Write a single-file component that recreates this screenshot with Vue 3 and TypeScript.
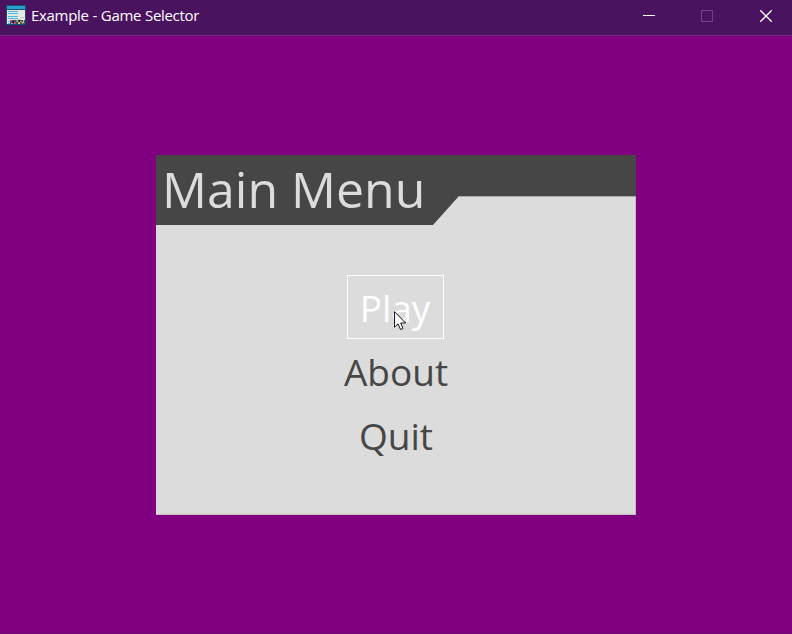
<script setup lang="ts">
import { ref } from 'vue'

interface MenuItem {
  id: string
  label: string
}

const windowTitle = 'Example - Game Selector'
const items: MenuItem[] = [
  { id: 'play', label: 'Play' },
  { id: 'about', label: 'About' },
  { id: 'quit', label: 'Quit' },
]
const selected = ref('play')
</script>

<template>
  <div class="window">
    <header class="titlebar">
      <svg class="app-icon" width="20" height="20" viewBox="0 0 20 20" shape-rendering="crispEdges">
        <rect width="20" height="20" fill="#14506f" />
        <rect x="1" y="1" width="18" height="3" fill="#2a9fcb" />
        <rect x="1" y="5" width="18" height="14" fill="#e6e8e4" />
        <path d="M2 6h10v1H2zM2 8h10v1H2zM2 11h10v1H2zM2 13h10v1H2zM2 16h2v1H2zM2 18h2v1H2z" fill="#45b9dc" />
        <path d="M12 14h3v1h-3zM14 12h4v1h-4z" fill="#c8cbc8" />
        <rect x="4" y="15" width="15" height="4" fill="#4a4b50" />
        <path d="M4 15h2v2H4zM8 17h2v2H8z" fill="#c53fb0" />
        <path d="M6 16h2v2H6zM13 15h1v2h-1z" fill="#202126" />
        <path d="M10 15h2v2h-2zM15 16h1v2h-1z" fill="#5fae72" />
        <path d="M12 17h2v2h-2zM17 15h1v3h-1z" fill="#d6c873" />
        <path d="M14 16h1v1h-1zM16 17h1v2h-1zM5 18h2v1H5z" fill="#a2a6aa" />
      </svg>
      <span class="window-title">{{ windowTitle }}</span>
      <div class="controls">
        <button aria-label="Minimize">
          <svg width="12" height="12" viewBox="0 0 12 12"><path d="M0 5.5h12" stroke="#fff" /></svg>
        </button>
        <button aria-label="Maximize" disabled>
          <svg width="12" height="12" viewBox="0 0 12 12"><rect x=".5" y=".5" width="11" height="11" fill="none" stroke="#70427f" /></svg>
        </button>
        <button aria-label="Close">
          <svg width="12" height="12" viewBox="0 0 12 12"><path d="M.3.3l11.4 11.4M11.7.3L.3 11.7" stroke="#fff" stroke-width="1.3" /></svg>
        </button>
      </div>
    </header>
    <main class="stage">
      <section class="panel">
        <div class="heading">
          <svg class="heading-shape" width="480" height="70" viewBox="0 0 480 70">
            <path d="M0 0H480V41H303L277 70H0Z" fill="#464646" />
            <path d="M303 41.5H480" stroke="#aaa" />
            <path
              d="M308 42L294 65M330 42Q362 50 380 65M372 43Q415 50 470 66M410 42L478 52"
              fill="none"
              stroke="#d3d3d3"
              stroke-width=".7"
              stroke-dasharray="2 4"
            />
          </svg>
          <h1>Main Menu</h1>
        </div>
        <nav class="menu">
          <button
            v-for="item in items"
            :key="item.id"
            class="item"
            :class="[item.id, { selected: selected === item.id }]"
            @click="selected = item.id"
          >
            <span>{{ item.label }}</span>
          </button>
        </nav>
        <svg class="streak" width="22" height="26" viewBox="0 0 22 26">
          <path d="M1 1L19 21" stroke="#e0e0e0" fill="none" />
        </svg>
      </section>
    </main>
    <svg class="cursor" width="13" height="20" viewBox="0 0 13 20">
      <path d="M.5.7V16.2L4 12.8L6.5 18.5L9 17.5L6.7 12H11.6Z" fill="#fff" stroke="#15151f" />
    </svg>
  </div>
</template>

<style>
body {
  margin: 0;
}
</style>

<style scoped>
.window {
  position: relative;
  box-sizing: border-box;
  width: 792px;
  height: 634px;
  display: flex;
  flex-direction: column;
  overflow: hidden;
  background: #800080;
  border-bottom: 1px solid #72107a;
  font-family: 'Open Sans', 'Noto Sans', sans-serif;
}

.titlebar {
  box-sizing: border-box;
  height: 36px;
  flex: none;
  display: flex;
  align-items: flex-start;
  background: #4a135f;
  border-bottom: 1px solid #702882;
}

.app-icon {
  margin: 5px 0 0 6px;
}

.window-title {
  margin: 5px 0 0 5px;
  color: #fff;
  font-size: 15px;
  line-height: 20px;
  letter-spacing: -0.3px;
  word-spacing: 0.2px;
  white-space: nowrap;
}

.controls {
  display: flex;
  margin-left: auto;
  margin-right: -3px;
}

.controls button {
  width: 58px;
  height: 32px;
  display: flex;
  align-items: center;
  justify-content: center;
  padding: 0;
  border: 0;
  background: none;
}

.controls button:not(:last-child) {
  padding-right: 2px;
}

.stage {
  padding: 119px 156px 0;
}

.panel {
  position: relative;
  box-sizing: border-box;
  width: 480px;
  height: 360px;
  background: #dcdcdc;
  box-shadow: inset -1px -1px #c4bdc4;
}

.heading {
  position: relative;
  height: 70px;
}

.heading-shape {
  position: absolute;
  inset: 0;
}

h1 {
  position: relative;
  margin: 0;
  padding-left: 6px;
  color: #dcdcdc;
  font-size: 50px;
  font-weight: 400;
  line-height: 68px;
  white-space: nowrap;
}

.menu {
  display: flex;
  flex-direction: column;
  align-items: center;
  padding-top: 50px;
}

.item {
  box-sizing: border-box;
  width: 98px;
  height: 64px;
  display: flex;
  justify-content: center;
  padding: 0;
  border: 1px solid transparent;
  background: none;
  color: #464646;
  font: 400 37px/64px 'Open Sans', 'Noto Sans', sans-serif;
  white-space: nowrap;
}

.item.selected {
  width: 97px;
  margin-right: 1px;
  padding-right: 1px;
  border-color: #fff;
  color: #fff;
}

.streak {
  position: absolute;
  left: 380px;
  top: 332px;
}

.cursor {
  position: absolute;
  left: 394px;
  top: 311px;
}
</style>
